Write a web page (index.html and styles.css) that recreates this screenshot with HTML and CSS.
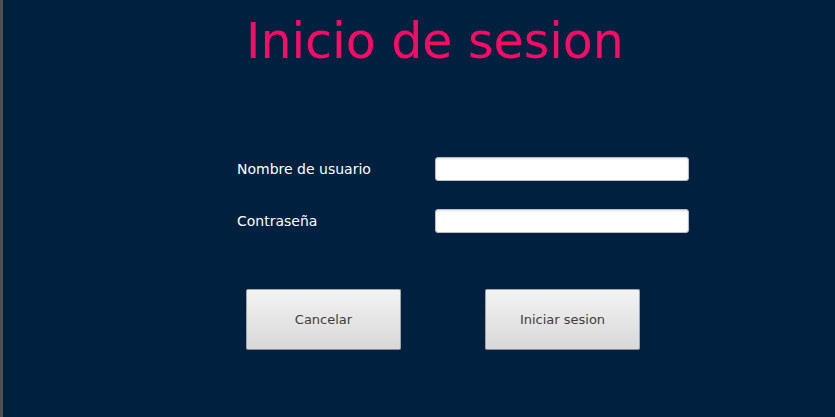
FILE: index.html
```html
<!DOCTYPE html>
<html lang="es">
<head>
<meta charset="utf-8">
<title>Inicio de sesion</title>
<link rel="stylesheet" href="styles.css">
</head>
<body>
<main class="page">
  <h1 class="title">Inicio de sesion</h1>
  <form class="login">
    <div class="row">
      <label class="label" for="user">Nombre de usuario</label>
      <input class="field" id="user" type="text">
    </div>
    <div class="row">
      <label class="label" for="pass">Contraseña</label>
      <input class="field" id="pass" type="password">
    </div>
    <div class="actions">
      <button class="btn" type="button">Cancelar</button>
      <button class="btn" type="submit">Iniciar sesion</button>
    </div>
  </form>
</main>
</body>
</html>
```

FILE: styles.css
```css
html, body {
  margin: 0;
  padding: 0;
  height: 100%;
}

body {
  background: #00203f;
  font-family: "DejaVu Sans", "Liberation Sans", sans-serif;
  overflow: hidden;
}

.page {
  box-sizing: border-box;
  height: 417px;
  border-left: 3px solid #4f5052;
  background: #00203f;
  padding-top: 13px;
}

.title {
  margin: 0 0 0 243px;
  font-weight: normal;
  font-size: 49px;
  line-height: 57px;
  color: #ff0a66;
}

.login {
  margin: 87px 0 0 234px;
  display: flex;
  flex-direction: column;
  gap: 28px;
}

.row {
  display: flex;
  align-items: center;
  height: 24px;
}

.label {
  width: 198px;
  font-size: 14px;
  color: #ffffff;
}

.field {
  box-sizing: border-box;
  width: 254px;
  height: 24px;
  margin: 0;
  padding: 0 4px;
  background: #ffffff;
  border: 1px solid #b9bec6;
  border-radius: 3px;
  box-shadow: inset 0 1px 2px rgba(0, 0, 0, 0.12);
  outline: none;
}

.actions {
  display: flex;
  gap: 84px;
  margin-top: 28px;
  padding-left: 9px;
}

.btn {
  box-sizing: border-box;
  width: 155px;
  height: 61px;
  margin: 0;
  padding: 0;
  font-family: "DejaVu Sans", "Liberation Sans", sans-serif;
  font-size: 13px;
  color: #3d3d3d;
  background: linear-gradient(#f3f3f3, #d8d8d8);
  border: 1px solid #a3a3a3;
  border-bottom-color: #8a8a8a;
  border-radius: 2px;
}
```
